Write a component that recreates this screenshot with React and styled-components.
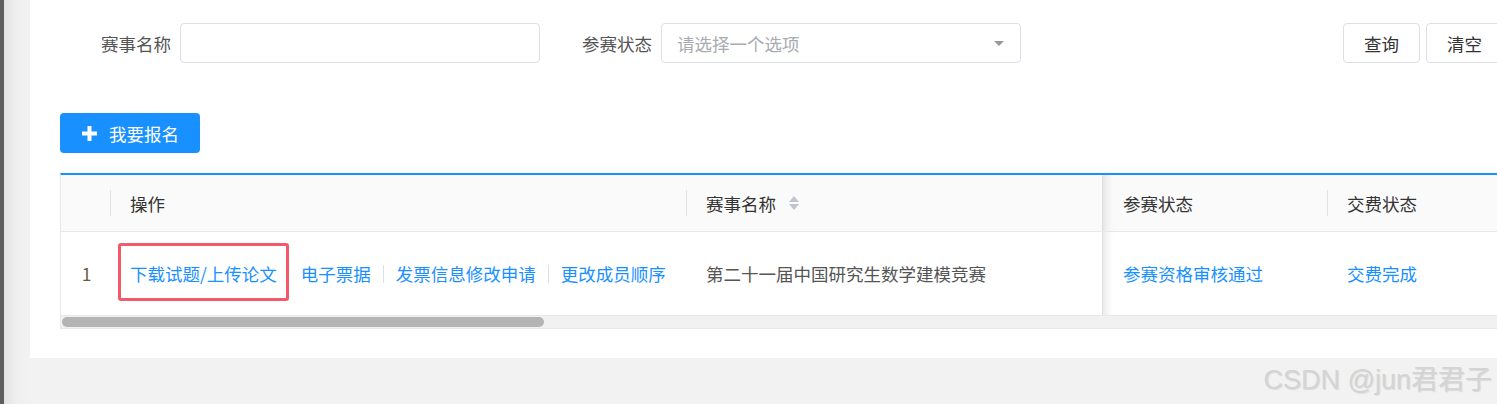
import React from "react";
import styled, { createGlobalStyle } from "styled-components";

const GlobalStyle = createGlobalStyle`
  html, body {
    margin: 0;
    padding: 0;
    background: #f2f2f2;
    font-family: "Noto Sans CJK SC", "Noto Sans", sans-serif;
  }
  * { box-sizing: border-box; }
`;

const FONT = `"Noto Sans CJK SC", "Noto Sans", sans-serif`;

function App() {
  return (
    <>
      <GlobalStyle />
      <Shell>
        <Rail />
        <Main>
          <Panel>
            <SearchBar>
              <FormItem>
                <Label>赛事名称</Label>
                <Input />
              </FormItem>
              <FormItem>
                <Label>参赛状态</Label>
                <Select>
                  <Placeholder>请选择一个选项</Placeholder>
                  <Caret />
                </Select>
              </FormItem>
              <Actions>
                <PlainButton>查询</PlainButton>
                <PlainButton>清空</PlainButton>
              </Actions>
            </SearchBar>

            <Toolbar>
              <PrimaryButton>
                <PlusIcon />
                我要报名
              </PrimaryButton>
            </Toolbar>

            <Table>
              <Row header>
                <Cell header center>
                  <span />
                </Cell>
                <Cell header divider>操作</Cell>
                <Cell header divider>
                  赛事名称
                  <SortIcon />
                </Cell>
                <Cell header fixed>参赛状态</Cell>
                <Cell header divider>交费状态</Cell>
              </Row>
              <Row>
                <Cell center>
                  <Index>1</Index>
                </Cell>
                <Cell>
                  <Links>
                    <Highlight>
                      <Link>下载试题/上传论文</Link>
                    </Highlight>
                    <Link>电子票据</Link>
                    <Sep />
                    <Link>发票信息修改申请</Link>
                    <Sep />
                    <Link>更改成员顺序</Link>
                  </Links>
                </Cell>
                <Cell>
                  <Text>第二十一届中国研究生数学建模竞赛</Text>
                </Cell>
                <Cell fixed>
                  <Link>参赛资格审核通过</Link>
                </Cell>
                <Cell>
                  <Link>交费完成</Link>
                </Cell>
              </Row>
              <Scrollbar>
                <Thumb />
              </Scrollbar>
            </Table>
          </Panel>
        </Main>
      </Shell>
      <Watermark>CSDN @jun君君子</Watermark>
    </>
  );
}

export default App;

function PlusIcon() {
  return (
    <svg width="15" height="15" viewBox="0 0 15 15">
      <path d="M5.5 0h4v5.5H15v4H9.5V15h-4V9.5H0v-4h5.5z" fill="#fff" />
    </svg>
  );
}

function SortIcon() {
  return (
    <SortSvg width="12" height="16" viewBox="0 0 12 16">
      <path d="M6 1L11 7H1z" fill="#c0c4cc" />
      <path d="M6 15L11 9H1z" fill="#c0c4cc" />
    </SortSvg>
  );
}

const Shell = styled.div`
  display: flex;
  width: 1497px;
  height: 404px;
  overflow: hidden;
  position: relative;
`;

const Rail = styled.div`
  flex: 0 0 30px;
  background: linear-gradient(
    to right,
    #5e5e5e 0,
    #5e5e5e 4px,
    #e2e2e2 4px,
    #efefef 16px,
    #f2f2f2 30px
  );
`;

const Main = styled.div`
  flex: 1;
  min-width: 0;
  background: #f2f2f2;
`;

const Panel = styled.div`
  background: #fff;
  height: 358px;
  padding: 23px 0 0 30px;
  overflow: hidden;
`;

const SearchBar = styled.div`
  display: flex;
  align-items: center;
  height: 40px;
`;

const FormItem = styled.div`
  display: flex;
  align-items: center;
  margin-right: 1px;
`;

const Label = styled.label`
  width: 120px;
  padding-right: 9px;
  text-align: right;
  font-family: ${FONT};
  font-size: 17.5px;
  color: #555;
`;

const Input = styled.div`
  width: 360px;
  height: 40px;
  border: 1px solid #dcdfe6;
  border-radius: 4px;
  background: #fff;
`;

const Select = styled(Input)`
  display: flex;
  align-items: center;
  justify-content: space-between;
  padding: 0 16px 0 15px;
`;

const Placeholder = styled.span`
  font-family: ${FONT};
  font-size: 17.5px;
  color: #a8abb2;
`;

const Caret = styled.span`
  width: 0;
  height: 0;
  border-left: 5px solid transparent;
  border-right: 5px solid transparent;
  border-top: 5px solid #999;
`;

const Actions = styled.div`
  display: flex;
  gap: 6px;
  margin-left: 321px;
`;

const PlainButton = styled.button`
  width: 77px;
  height: 40px;
  flex: 0 0 77px;
  border: 1px solid #dcdfe6;
  border-radius: 4px;
  background: #fff;
  font-family: ${FONT};
  font-size: 17.5px;
  color: #333;
  padding: 0;
`;

const Toolbar = styled.div`
  display: flex;
  margin-top: 50px;
`;

const PrimaryButton = styled.button`
  display: flex;
  align-items: center;
  gap: 12px;
  width: 140px;
  height: 40px;
  padding: 0 0 0 22px;
  border: none;
  border-radius: 4px;
  background: #1890ff;
  color: #fff;
  font-family: ${FONT};
  font-size: 17.5px;
`;

const Table = styled.div`
  margin-top: 20px;
  width: 1437px;
  border-top: 2px solid #1890ff;
  border-left: 1px solid #e8e8e8;
  border-bottom: 1px solid #e8e8e8;
`;

const Row = styled.div`
  display: grid;
  grid-template-columns: 49px 576px 416px 225px 1fr;
  height: ${(p) => (p.header ? "57px" : "84px")};
  background: ${(p) => (p.header ? "#fafafa" : "#fff")};
  border-bottom: 1px solid #e8e8e8;
`;

const Cell = styled.div`
  position: relative;
  display: flex;
  align-items: center;
  justify-content: ${(p) => (p.center ? "center" : "flex-start")};
  padding-left: ${(p) => (p.center ? "0" : "20px")};
  font-family: ${FONT};
  font-size: 17.5px;
  color: ${(p) => (p.header ? "#333" : "#606266")};
  border-left: ${(p) => (p.fixed ? "1px solid #e0e0e0" : "none")};
  box-shadow: ${(p) =>
    p.fixed ? "inset 10px 0 10px -8px rgba(0, 0, 0, 0.12)" : "none"};

  &::before {
    content: "";
    display: ${(p) => (p.divider ? "block" : "none")};
    position: absolute;
    left: 0;
    top: 15px;
    bottom: 15px;
    width: 1px;
    background: #e3e3e3;
  }
`;

const SortSvg = styled.svg`
  margin-left: 12px;
`;

const Index = styled.span`
  color: #6b5a3e;
  margin-left: 2px;
`;

const Text = styled.span`
  color: #555;
`;

const Links = styled.div`
  display: flex;
  align-items: center;
  gap: 12px;
`;

const Link = styled.a`
  color: #1890ff;
  font-family: ${FONT};
  font-size: 17.5px;
  line-height: 24px;
  cursor: pointer;
  white-space: nowrap;
`;

const Sep = styled.span`
  width: 1px;
  height: 18px;
  background: #dcdfe6;
`;

const Highlight = styled.span`
  position: relative;
  display: inline-flex;
  margin-right: 12px;

  &::after {
    content: "";
    position: absolute;
    left: -12px;
    right: -12px;
    top: -19px;
    bottom: -15px;
    border: 3px solid #f5586a;
    border-radius: 3px;
  }
`;

const Scrollbar = styled.div`
  height: 12px;
  background: #f1f1f1;
  padding: 1px 0 0 1px;
`;

const Thumb = styled.div`
  width: 482px;
  height: 10px;
  border-radius: 6px;
  background: #b4b4b4;
`;

const Watermark = styled.div`
  position: absolute;
  right: 5px;
  top: 358px;
  font-family: "Liberation Sans", "Noto Sans CJK SC", sans-serif;
  font-size: 27px;
  font-weight: 400;
  color: #d4d4d4;
  text-shadow: 1px 1px 1px rgba(0, 0, 0, 0.1);
`;
